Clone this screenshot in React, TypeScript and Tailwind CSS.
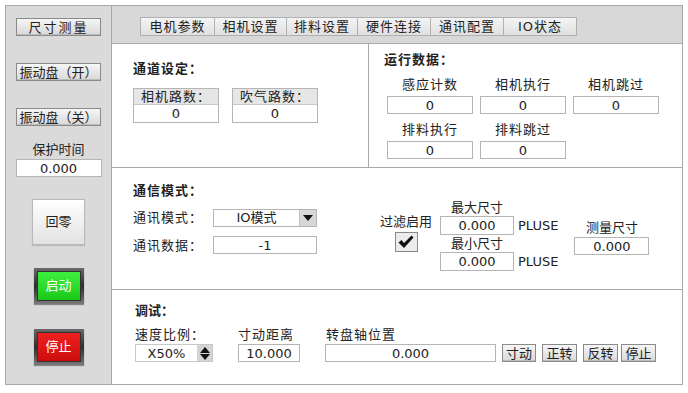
import React from "react";

const btn =
  "flex items-center justify-center border border-[#8a8a8a] bg-gradient-to-b from-[#f6f6f6] to-[#d9d9d9] shadow-[inset_0_-1px_0_#bdbdbd] text-[13px] text-[#222] leading-none";
const box =
  "flex items-center justify-center border border-[#b5b5b5] bg-white text-[13px] text-[#222] leading-none";

function Check() {
  return (
    <svg width="16" height="14" viewBox="0 0 16 14">
      <path d="M0.5 7.5 L3.5 5 L6 8 L13.5 0.5 L15.5 2.5 L6 13 Z" fill="#111" />
    </svg>
  );
}

function LabeledBox({ label, value, w = "w-[86px]" }: { label: string; value: string; w?: string }) {
  return (
    <div className={`flex flex-col items-center ${w}`}>
      <div className="h-[16px] text-[13px] leading-[16px] tracking-[1px]">{label}</div>
      <div className={`${box} ${w} h-[18px] mt-[3px]`}>{value}</div>
    </div>
  );
}

function ColorBtn({ color, label }: { color: "green" | "red"; label: string }) {
  const inner =
    color === "green"
      ? "bg-gradient-to-b from-[#3ef03e] to-[#18c818]"
      : "bg-gradient-to-b from-[#ee2020] to-[#cc0c0c]";
  return (
    <div className="w-[50px] h-[36px] p-[3px] bg-gradient-to-b from-[#6a6a6a] via-[#2e2e2e] to-[#7a7a7a] shadow-[0_1px_1px_#888]">
      <div className={`w-full h-full ${inner} flex items-center justify-center text-white text-[13px] border border-[#333]`}>
        {label}
      </div>
    </div>
  );
}

export default function App() {
  return (
    <div className="w-[688px] h-[393px] bg-white pt-[5px] pl-[5px] text-[#222] font-['DejaVu_Sans','Noto_Sans_CJK_SC',sans-serif]">
      <div className="w-[678px] h-[380px] flex border border-[#a8a8a8]">
        {/* Left panel */}
        <div className="w-[106px] h-full bg-[#dadada] border-r border-[#a8a8a8] flex flex-col items-center">
          <div className={`${btn} w-[85px] h-[18px] mt-[12px] tracking-[2px]`}>尺寸测量</div>
          <div className={`${btn} w-[85px] h-[18px] mt-[27px]`}>振动盘（开）</div>
          <div className={`${btn} w-[85px] h-[18px] mt-[27px]`}>振动盘（关）</div>
          <div className="mt-[16px] h-[16px] text-[13px] leading-[16px]">保护时间</div>
          <div className={`${box} w-[86px] h-[18px] mt-[1px] border-[#999]`}>0.000</div>
          <div className="mt-[22px] w-[53px] h-[46px] border border-[#b8b8b8] bg-gradient-to-b from-[#ffffff] to-[#e2e2e2] flex items-center justify-center text-[13px] shadow-[0_1px_1px_#bbb]">
            回零
          </div>
          <div className="mt-[23px]">
            <ColorBtn color="green" label="启动" />
          </div>
          <div className="mt-[25px]">
            <ColorBtn color="red" label="停止" />
          </div>
        </div>

        {/* Right panel */}
        <div className="flex-1 flex flex-col">
          {/* Tabs */}
          <div className="h-[38px] bg-[#d8d8d8] border-b border-[#a8a8a8] pl-[28px] pt-[11px] flex">
            {[
              ["电机参数", "w-[75px]"],
              ["相机设置", "w-[73px]"],
              ["排料设置", "w-[72px]"],
              ["硬件连接", "w-[74px]"],
              ["通讯配置", "w-[74px]"],
              ["IO状态", "w-[74px]"],
            ].map(([t, w]) => (
              <div
                key={t}
                className={`${w} h-[19px] border border-[#b0b0b0] -ml-px first:ml-0 bg-gradient-to-b from-[#f4f4f4] to-[#e0e0e0] flex items-center justify-center text-[13px] tracking-[1px] leading-none`}
              >
                {t}
              </div>
            ))}
          </div>

          {/* Section 1 */}
          <div className="h-[124px] flex border-b border-[#a8a8a8]">
            <div className="w-[257px] border-r border-[#a8a8a8] pl-[21px] pt-[17px]">
              <div className="h-[16px] text-[13px] leading-[16px] font-bold tracking-[1px]">通道设定：</div>
              <div className="flex gap-[13px] mt-[11px]">
                {["相机路数：", "吹气路数："].map((l) => (
                  <div key={l} className="w-[86px] border border-[#b5b5b5]">
                    <div className="h-[16px] bg-[#e6e6e6] border-b border-[#c8c8c8] flex items-center justify-center text-[13px] tracking-[1px] leading-none">
                      {l}
                    </div>
                    <div className="h-[17px] bg-white flex items-center justify-center text-[13px] leading-none">0</div>
                  </div>
                ))}
              </div>
            </div>
            <div className="flex-1 pl-[15px] pt-[8px]">
              <div className="h-[16px] text-[13px] leading-[16px] font-bold tracking-[1px]">运行数据：</div>
              <div className="pl-[3px] mt-[9px] flex gap-[7px]">
                <LabeledBox label="感应计数" value="0" />
                <LabeledBox label="相机执行" value="0" />
                <LabeledBox label="相机跳过" value="0" />
              </div>
              <div className="pl-[3px] mt-[8px] flex gap-[7px]">
                <LabeledBox label="排料执行" value="0" />
                <LabeledBox label="排料跳过" value="0" />
              </div>
            </div>
          </div>

          {/* Section 2 */}
          <div className="h-[122px] flex border-b border-[#a8a8a8]">
            <div className="w-[256px] pl-[21px] pt-[15px]">
              <div className="h-[16px] text-[13px] leading-[16px] font-bold tracking-[1px]">通信模式：</div>
              <div className="flex items-center mt-[9px]">
                <div className="w-[80px] text-[13px] tracking-[1px]">通讯模式：</div>
                <div className="w-[104px] h-[18px] border border-[#b5b5b5] bg-white flex">
                  <div className="flex-1 flex items-center justify-center text-[13px] leading-none">IO模式</div>
                  <div className="w-[17px] h-full bg-[#d8d8d8] border-l border-[#c0c0c0] flex items-center justify-center">
                    <svg width="10" height="6" viewBox="0 0 10 6">
                      <path d="M0 0 L10 0 L5 6 Z" fill="#111" />
                    </svg>
                  </div>
                </div>
              </div>
              <div className="flex items-center mt-[8px]">
                <div className="w-[80px] text-[13px] tracking-[1px]">通讯数据：</div>
                <div className={`${box} w-[104px] h-[18px]`}>-1</div>
              </div>
            </div>
            <div className="flex-1 flex">
              <div className="flex flex-col items-center w-[56px] ml-[10px] mt-[46px]">
                <div className="h-[16px] text-[13px] leading-[16px]">过滤启用</div>
                <div className="w-[23px] h-[20px] mt-[2px] border border-[#888] bg-[#ececec] flex items-center justify-center">
                  <Check />
                </div>
              </div>
              <div className="ml-[6px] mt-[32px] flex flex-col">
                <div className="w-[74px] text-center h-[16px] text-[13px] leading-[16px]">最大尺寸</div>
                <div className="flex items-center">
                  <div className={`${box} w-[74px] h-[19px]`}>0.000</div>
                  <div className="ml-[4px] text-[13px] leading-none">PLUSE</div>
                </div>
                <div className="w-[74px] text-center h-[16px] text-[13px] leading-[16px] mt-[1px]">最小尺寸</div>
                <div className="flex items-center">
                  <div className={`${box} w-[74px] h-[19px]`}>0.000</div>
                  <div className="ml-[4px] text-[13px] leading-none">PLUSE</div>
                </div>
              </div>
              <div className="ml-[16px] mt-[52px] flex flex-col items-center">
                <div className="h-[16px] text-[13px] leading-[16px]">测量尺寸</div>
                <div className={`${box} w-[75px] h-[18px] mt-[1px]`}>0.000</div>
              </div>
            </div>
          </div>

          {/* Section 3 */}
          <div className="flex-1 pl-[23px] pt-[13px]">
            <div className="h-[16px] text-[13px] leading-[16px] font-bold">调试：</div>
            <div className="flex mt-[8px]">
              <div className="flex flex-col w-[78px]">
                <div className="h-[16px] text-[13px] leading-[16px] tracking-[1px]">速度比例：</div>
                <div className="h-[18px] mt-[1px] flex border border-[#c8c8c8] bg-white">
                  <div className="flex-1 flex items-center justify-center text-[13px] leading-none">X50%</div>
                  <div className="w-[15px] bg-[#d4d4d4] flex flex-col items-center justify-center gap-[1px]">
                    <svg width="10" height="6" viewBox="0 0 10 6">
                      <path d="M0 6 L10 6 L5 0 Z" fill="#111" />
                    </svg>
                    <svg width="10" height="6" viewBox="0 0 10 6">
                      <path d="M0 0 L10 0 L5 6 Z" fill="#111" />
                    </svg>
                  </div>
                </div>
              </div>
              <div className="flex flex-col ml-[25px]">
                <div className="h-[16px] text-[13px] leading-[16px] tracking-[1px]">寸动距离</div>
                <div className={`${box} w-[62px] h-[18px] mt-[1px] border-[#999]`}>10.000</div>
              </div>
              <div className="flex flex-col ml-[25px]">
                <div className="h-[16px] text-[13px] leading-[16px] tracking-[1px] pl-[1px]">转盘轴位置</div>
                <div className="flex items-center mt-[1px]">
                  <div className={`${box} w-[171px] h-[18px]`}>0.000</div>
                  <div className={`${btn} w-[34px] h-[18px] ml-[6px]`}>寸动</div>
                  <div className={`${btn} w-[35px] h-[18px] ml-[6px]`}>正转</div>
                  <div className={`${btn} w-[35px] h-[18px] ml-[6px]`}>反转</div>
                  <div className={`${btn} w-[35px] h-[18px] ml-[3px]`}>停止</div>
                </div>
              </div>
            </div>
          </div>
        </div>
      </div>
    </div>
  );
}
